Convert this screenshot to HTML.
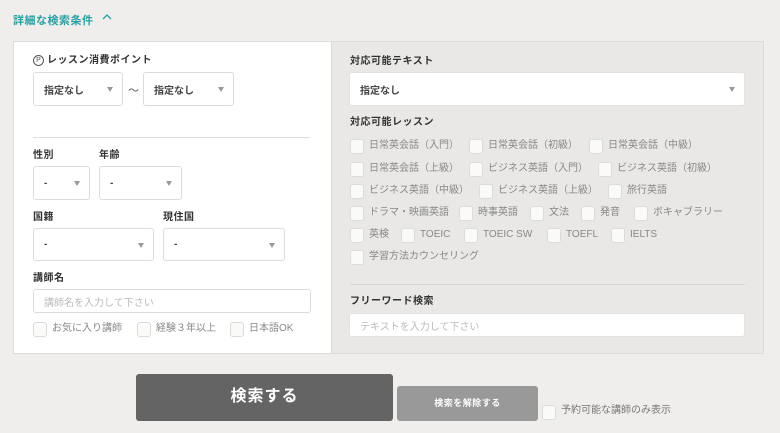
<!DOCTYPE html>
<html><head><meta charset="utf-8"><style>
*{box-sizing:border-box;margin:0;padding:0}
body{width:780px;height:433px;background:#efeeec;position:relative;overflow:hidden;font-family:"Liberation Sans","Noto Sans CJK JP",sans-serif;color:#333}
.a{position:absolute}
.lbl{position:absolute;font-size:10px;font-weight:bold;color:#333;letter-spacing:0.5px;line-height:12px}
.sel{position:absolute;background:#fff;border:1px solid #dcdcdc;border-radius:3px;font-size:10px;font-weight:bold;color:#444;padding-left:10px;display:flex;align-items:center}
.sel:after{content:"";position:absolute;right:9px;top:50%;margin-top:-2px;border-left:3px solid transparent;border-right:3px solid transparent;border-top:5px solid #999}
.cb{position:absolute;width:14px;height:15px;background:#fafaf9;border:1px solid #dcdcdc;border-radius:3px}
.t{position:absolute;font-size:10px;color:#888;line-height:14px;white-space:nowrap}
.inp{position:absolute;background:#fff;border:1px solid #dcdcdc;border-radius:3px;font-size:10px;color:#bbb;padding-left:10px;display:flex;align-items:center}
</style></head><body>
<div class="a" style="left:13px;top:12px;font-size:11px;font-weight:bold;color:#2aa0a3;letter-spacing:0.5px">詳細な検索条件</div>
<svg class="a" style="left:101px;top:12px" width="12" height="10"><path d="M2 7 L6 3 L10 7" fill="none" stroke="#2aa0a3" stroke-width="1.3"/></svg>
<div class="a" style="left:13px;top:41px;width:318px;height:313px;background:#fff;border:1px solid #dddcda;border-right:none"></div>
<div class="a" style="left:331px;top:41px;width:433px;height:313px;background:#e9e8e6;border:1px solid #dddcda"></div>

<div class="a" style="left:33px;top:55px;width:11px;height:11px;border:1px solid #555;border-radius:50%;font-size:7px;text-align:center;line-height:9px;color:#555">P</div>
<div class="lbl" style="left:47px;top:55px">レッスン消費ポイント</div>
<div class="sel" style="left:33px;top:72px;width:90px;height:34px">指定なし</div>
<div class="a" style="left:128px;top:82px;font-size:11px;color:#555">〜</div>
<div class="sel" style="left:143px;top:72px;width:91px;height:34px">指定なし</div>
<div class="a" style="left:33px;top:137px;width:277px;height:1px;background:#ddd"></div>

<div class="lbl" style="left:33px;top:150px">性別</div>
<div class="lbl" style="left:99px;top:150px">年齢</div>
<div class="sel" style="left:33px;top:166px;width:57px;height:34px">-</div>
<div class="sel" style="left:99px;top:166px;width:83px;height:34px">-</div>
<div class="lbl" style="left:33px;top:212px">国籍</div>
<div class="lbl" style="left:163px;top:212px">現住国</div>
<div class="sel" style="left:33px;top:228px;width:121px;height:33px">-</div>
<div class="sel" style="left:163px;top:228px;width:122px;height:33px">-</div>
<div class="lbl" style="left:33px;top:273px">講師名</div>
<div class="inp" style="left:33px;top:289px;width:278px;height:24px">講師名を入力して下さい</div>
<div class="cb" style="left:33px;top:322px"></div><div class="t" style="left:52px;top:322px">お気に入り講師</div>
<div class="cb" style="left:137px;top:322px"></div><div class="t" style="left:156px;top:322px">経験３年以上</div>
<div class="cb" style="left:230px;top:322px"></div><div class="t" style="left:249px;top:322px">日本語OK</div>

<div class="lbl" style="left:350px;top:56px">対応可能テキスト</div>
<div class="sel" style="left:349px;top:72px;width:396px;height:34px;border-color:#e2e2e2">指定なし</div>
<div class="lbl" style="left:350px;top:117px">対応可能レッスン</div>

<div class="cb" style="left:350px;top:139px"></div><div class="t" style="left:369px;top:139px">日常英会話（入門）</div>
<div class="cb" style="left:469px;top:139px"></div><div class="t" style="left:488px;top:139px">日常英会話（初級）</div>
<div class="cb" style="left:589px;top:139px"></div><div class="t" style="left:608px;top:139px">日常英会話（中級）</div>

<div class="cb" style="left:350px;top:162px"></div><div class="t" style="left:369px;top:162px">日常英会話（上級）</div>
<div class="cb" style="left:469px;top:162px"></div><div class="t" style="left:488px;top:162px">ビジネス英語（入門）</div>
<div class="cb" style="left:598px;top:162px"></div><div class="t" style="left:617px;top:162px">ビジネス英語（初級）</div>

<div class="cb" style="left:350px;top:184px"></div><div class="t" style="left:369px;top:184px">ビジネス英語（中級）</div>
<div class="cb" style="left:479px;top:184px"></div><div class="t" style="left:498px;top:184px">ビジネス英語（上級）</div>
<div class="cb" style="left:608px;top:184px"></div><div class="t" style="left:627px;top:184px">旅行英語</div>

<div class="cb" style="left:350px;top:206px"></div><div class="t" style="left:369px;top:206px">ドラマ・映画英語</div>
<div class="cb" style="left:459px;top:206px"></div><div class="t" style="left:478px;top:206px">時事英語</div>
<div class="cb" style="left:530px;top:206px"></div><div class="t" style="left:549px;top:206px">文法</div>
<div class="cb" style="left:581px;top:206px"></div><div class="t" style="left:600px;top:206px">発音</div>
<div class="cb" style="left:634px;top:206px"></div><div class="t" style="left:653px;top:206px">ボキャブラリー</div>

<div class="cb" style="left:350px;top:228px"></div><div class="t" style="left:369px;top:228px">英検</div>
<div class="cb" style="left:401px;top:228px"></div><div class="t" style="left:420px;top:228px">TOEIC</div>
<div class="cb" style="left:464px;top:228px"></div><div class="t" style="left:483px;top:228px">TOEIC SW</div>
<div class="cb" style="left:547px;top:228px"></div><div class="t" style="left:566px;top:228px">TOEFL</div>
<div class="cb" style="left:611px;top:228px"></div><div class="t" style="left:630px;top:228px">IELTS</div>

<div class="cb" style="left:350px;top:250px"></div><div class="t" style="left:369px;top:250px">学習方法カウンセリング</div>

<div class="a" style="left:350px;top:284px;width:395px;height:1px;background:#d8d7d5"></div>
<div class="lbl" style="left:350px;top:296px">フリーワード検索</div>
<div class="inp" style="left:349px;top:313px;width:396px;height:24px;border-color:#e2e2e2">テキストを入力して下さい</div>

<div class="a" style="left:136px;top:374px;width:257px;height:47px;background:#646464;border-radius:3px;color:#fff;font-size:16px;font-weight:bold;text-align:center;line-height:45px;letter-spacing:1px">検索する</div>
<div class="a" style="left:397px;top:386px;width:141px;height:35px;background:#999;border-radius:3px;color:#fff;font-size:9px;font-weight:bold;text-align:center;line-height:34px;letter-spacing:0.5px">検索を解除する</div>
<div class="cb" style="left:542px;top:405px"></div><div class="t" style="left:561px;top:404px;color:#777">予約可能な講師のみ表示</div>
</body></html>
